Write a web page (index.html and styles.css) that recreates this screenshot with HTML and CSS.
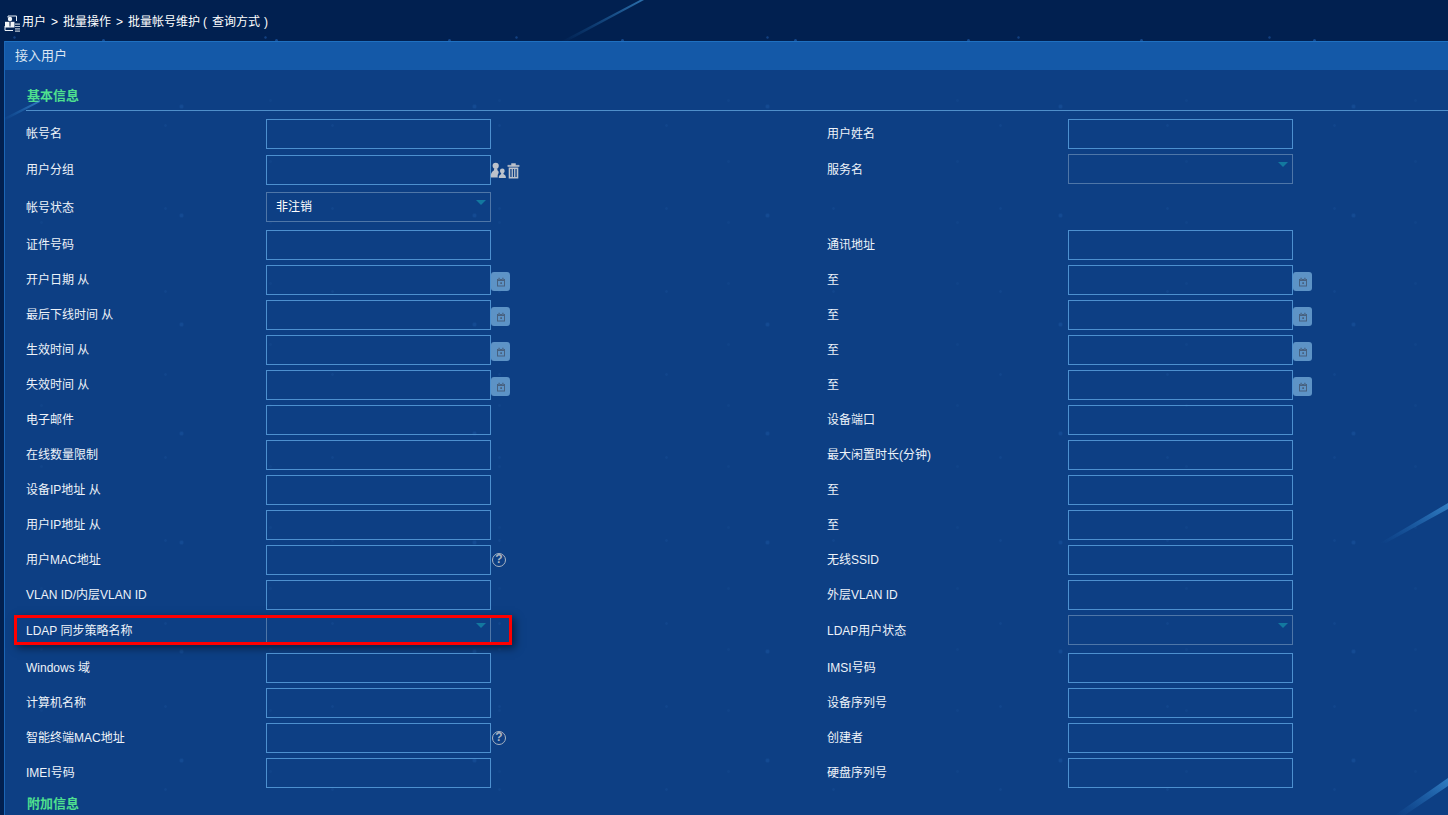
FILE: index.html
```html
<!DOCTYPE html>
<html lang="zh-CN">
<head>
<meta charset="utf-8">
<title>批量帐号维护</title>
<link rel="stylesheet" href="styles.css">
</head>
<body>
<svg class="streaks" width="1448" height="815" viewBox="0 0 1448 815" aria-hidden="true">
  <defs>
    <linearGradient id="s1" x1="0" y1="1" x2="1" y2="0"><stop offset="0" stop-color="#2f8fe0" stop-opacity="0"/><stop offset="1" stop-color="#4fb0f5" stop-opacity=".55"/></linearGradient>
  </defs>
  <polygon points="560,42 640,0 644,0 566,42" fill="url(#s1)"/>
  <polygon points="1380,543 1448,503 1448,509 1386,543" fill="url(#s1)"/>
  <polygon points="1395,815 1448,778 1448,786 1405,815" fill="url(#s1)"/>
  <polygon points="4,118 40,100 40,102 4,121" fill="url(#s1)"/>
</svg>
<header class="crumbs">
  <svg class="crumb-icon" width="16" height="17" viewBox="0 0 16 17" aria-hidden="true">
    <path d="M4 2.500V1H12.500V6M1 11V15.500H9" fill="none" stroke="#e8eef5" stroke-width="1"/>
    <circle cx="6" cy="4" r="2.200" fill="#f2f5f8"/>
    <path d="M1 6.800H10.500V12.500H1Z" fill="#f2f5f8"/>
    <path d="M5.300 6.800H6.700L6.500 11.500H5.500Z" fill="#22385c"/>
    <path d="M11 8.500H16V9.700H11ZM11 10.900H16V12.100H11ZM11 13.300H16V14.500H11ZM11 15.500H16V16.700H11Z" fill="#b9c4d0"/>
  </svg>
  <span>用户</span><span class="sep">&gt;</span><span>批量操作</span><span class="sep">&gt;</span><span>批量帐号维护<span class="paren">(</span>查询方式<span class="paren">)</span></span>
</header>
<main class="panel">
  <h1 class="panel-title">接入用户</h1>
  <div class="panel-body">
    <h2 class="section section-first">基本信息</h2>

    <div class="row r1"><label>帐号名</label><div class="cell"><span class="field"></span></div><label class="lab-r">用户姓名</label><div class="cell"><span class="field"></span></div></div>

    <div class="row r2">
      <label>用户分组</label>
      <div class="cell"><span class="field"></span>
        <svg class="ico-group" width="17" height="17" viewBox="0 0 17 17" aria-hidden="true"><g fill="#bcc2cb"><circle cx="5.700" cy="3.800" r="3.100"/><path d="M4.300 6.500H7.100L7.600 8.500C9 9.500 8.800 10.500 8.400 11.500C7.700 12.500 7.500 14 7.800 15.500H1C.4 12.500 1.200 10 3.800 8.500Z"/><circle cx="12.300" cy="9" r="2.400"/><path d="M11.300 11H13.300L13.700 12.300C15.500 13 16 14.500 15.900 16H8.800C8.700 14.500 9.200 13 10.900 12.300Z"/></g></svg>
        <svg class="ico-trash" width="13" height="16" viewBox="0 0 13 16" aria-hidden="true"><path d="M.8 2.300H12.200V3.500H.8ZM4.500 2.300V.6H8.500V2.300" fill="#bcc2cb" stroke="#bcc2cb" stroke-width=".5"/><path d="M1.700 4.500H11.300V15.500H1.700ZM3.300 6V14H4.600V6ZM5.900 6V14H7.100V6ZM8.400 6V14H9.700V6Z" fill="#bcc2cb" fill-rule="evenodd"/></svg>
      </div>
      <label class="lab-r">服务名</label><div class="cell cell-up"><span class="field select"><i class="caret"></i></span></div>
    </div>

    <div class="row r3"><label class="lab-low">帐号状态</label><div class="cell"><span class="field select">非注销<i class="caret"></i></span></div></div>

    <div class="row r4"><label>证件号码</label><div class="cell"><span class="field"></span></div><label class="lab-r">通讯地址</label><div class="cell"><span class="field"></span></div></div>

    <div class="row"><label>开户日期 从</label><div class="cell"><span class="field"></span><span class="cal"><svg width="10" height="10" viewBox="0 0 10 10" aria-hidden="true"><path d="M1 2H9V9.500H1ZM2 4V8.500H8V4ZM2.500 .8H3.700V2.500H2.500ZM6.300 .8H7.500V2.500H6.300ZM4.300 5.200H6V7H4.300Z" fill="#48617f" fill-rule="evenodd"/></svg></span></div><label class="lab-r">至</label><div class="cell"><span class="field"></span><span class="cal"><svg width="10" height="10" viewBox="0 0 10 10" aria-hidden="true"><path d="M1 2H9V9.500H1ZM2 4V8.500H8V4ZM2.500 .8H3.700V2.500H2.500ZM6.300 .8H7.500V2.500H6.300ZM4.300 5.200H6V7H4.300Z" fill="#48617f" fill-rule="evenodd"/></svg></span></div></div>

    <div class="row"><label>最后下线时间 从</label><div class="cell"><span class="field"></span><span class="cal"><svg width="10" height="10" viewBox="0 0 10 10" aria-hidden="true"><path d="M1 2H9V9.500H1ZM2 4V8.500H8V4ZM2.500 .8H3.700V2.500H2.500ZM6.300 .8H7.500V2.500H6.300ZM4.300 5.200H6V7H4.300Z" fill="#48617f" fill-rule="evenodd"/></svg></span></div><label class="lab-r">至</label><div class="cell"><span class="field"></span><span class="cal"><svg width="10" height="10" viewBox="0 0 10 10" aria-hidden="true"><path d="M1 2H9V9.500H1ZM2 4V8.500H8V4ZM2.500 .8H3.700V2.500H2.500ZM6.300 .8H7.500V2.500H6.300ZM4.300 5.200H6V7H4.300Z" fill="#48617f" fill-rule="evenodd"/></svg></span></div></div>

    <div class="row"><label>生效时间 从</label><div class="cell"><span class="field"></span><span class="cal"><svg width="10" height="10" viewBox="0 0 10 10" aria-hidden="true"><path d="M1 2H9V9.500H1ZM2 4V8.500H8V4ZM2.500 .8H3.700V2.500H2.500ZM6.300 .8H7.500V2.500H6.300ZM4.300 5.200H6V7H4.300Z" fill="#48617f" fill-rule="evenodd"/></svg></span></div><label class="lab-r">至</label><div class="cell"><span class="field"></span><span class="cal"><svg width="10" height="10" viewBox="0 0 10 10" aria-hidden="true"><path d="M1 2H9V9.500H1ZM2 4V8.500H8V4ZM2.500 .8H3.700V2.500H2.500ZM6.300 .8H7.500V2.500H6.300ZM4.300 5.200H6V7H4.300Z" fill="#48617f" fill-rule="evenodd"/></svg></span></div></div>

    <div class="row"><label>失效时间 从</label><div class="cell"><span class="field"></span><span class="cal"><svg width="10" height="10" viewBox="0 0 10 10" aria-hidden="true"><path d="M1 2H9V9.500H1ZM2 4V8.500H8V4ZM2.500 .8H3.700V2.500H2.500ZM6.300 .8H7.500V2.500H6.300ZM4.300 5.200H6V7H4.300Z" fill="#48617f" fill-rule="evenodd"/></svg></span></div><label class="lab-r">至</label><div class="cell"><span class="field"></span><span class="cal"><svg width="10" height="10" viewBox="0 0 10 10" aria-hidden="true"><path d="M1 2H9V9.500H1ZM2 4V8.500H8V4ZM2.500 .8H3.700V2.500H2.500ZM6.300 .8H7.500V2.500H6.300ZM4.300 5.200H6V7H4.300Z" fill="#48617f" fill-rule="evenodd"/></svg></span></div></div>

    <div class="row"><label>电子邮件</label><div class="cell"><span class="field"></span></div><label class="lab-r">设备端口</label><div class="cell"><span class="field"></span></div></div>
    <div class="row"><label>在线数量限制</label><div class="cell"><span class="field"></span></div><label class="lab-r">最大闲置时长(分钟)</label><div class="cell"><span class="field"></span></div></div>
    <div class="row"><label>设备IP地址 从</label><div class="cell"><span class="field"></span></div><label class="lab-r">至</label><div class="cell"><span class="field"></span></div></div>
    <div class="row"><label>用户IP地址 从</label><div class="cell"><span class="field"></span></div><label class="lab-r">至</label><div class="cell"><span class="field"></span></div></div>
    <div class="row"><label>用户MAC地址</label><div class="cell"><span class="field"></span><span class="help">?</span></div><label class="lab-r">无线SSID</label><div class="cell"><span class="field"></span></div></div>
    <div class="row"><label>VLAN ID/内层VLAN ID</label><div class="cell"><span class="field"></span></div><label class="lab-r">外层VLAN ID</label><div class="cell"><span class="field"></span></div></div>

    <div class="row r-mark">
      <label class="lab-low">LDAP 同步策略名称</label><div class="cell"><span class="field select"><i class="caret"></i></span></div>
      <label class="lab-r lab-low">LDAP用户状态</label><div class="cell"><span class="field select"><i class="caret"></i></span></div>
      <span class="mark"></span>
    </div>

    <div class="row"><label>Windows 域</label><div class="cell"><span class="field"></span></div><label class="lab-r">IMSI号码</label><div class="cell"><span class="field"></span></div></div>
    <div class="row"><label>计算机名称</label><div class="cell"><span class="field"></span></div><label class="lab-r">设备序列号</label><div class="cell"><span class="field"></span></div></div>
    <div class="row"><label>智能终端MAC地址</label><div class="cell"><span class="field"></span><span class="help">?</span></div><label class="lab-r">创建者</label><div class="cell"><span class="field"></span></div></div>
    <div class="row"><label>IMEI号码</label><div class="cell"><span class="field"></span></div><label class="lab-r">硬盘序列号</label><div class="cell"><span class="field"></span></div></div>

    <h2 class="section section-second">附加信息</h2>
  </div>
</main>
</body>
</html>
```
FILE: styles.css
```css
* { box-sizing: border-box; }
html, body { height: 815px; overflow: hidden; }
body {
  margin: 0;
  position: relative;
  font-family: "Liberation Sans", "Noto Sans CJK SC", sans-serif;
  font-size: 12px;
  color: #eef3f9;
  background-color: #012050;
  background-image:
    radial-gradient(circle, #1c66b4 0 1.3px, transparent 2.4px),
    radial-gradient(circle, #154a90 0 .9px, transparent 1.8px),
    radial-gradient(circle, #123f80 0 .8px, transparent 1.6px),
    radial-gradient(circle, #103a78 0 .8px, transparent 1.6px);
  background-size: 347px 97px, 173px 71px, 251px 53px, 89px 113px;
  background-position: 60px 23px, 17px 5px, 140px 11px, 40px 31px;
}
.streaks { position: absolute; left: 0; top: 0; z-index: 2; pointer-events: none; }

.crumbs {
  height: 41px;
  padding: 14px 0 0 4px;
  display: flex;
  align-items: flex-start;
  line-height: 17px;
  color: #fff;
}
.crumb-icon { margin: 1px 2px 0 0; flex: none; }
.sep { margin: 0 5px; }
.paren { margin: 0 5px 0 3px; }
.paren:last-child { margin: 0 0 0 4px; }

.panel {
  margin-left: 4px;
  height: 774px;
  position: relative;
  z-index: 1;
  border-left: 1px solid #1c66b6;
  background-color: #0d3f84;
  background-image:
    radial-gradient(circle, #144a92 0 1.2px, transparent 2.6px),
    radial-gradient(circle, #11458c 0 .8px, transparent 1.8px),
    radial-gradient(circle, #104389 0 .8px, transparent 1.8px);
  background-size: 293px 109px, 167px 83px, 229px 61px;
  background-position: 30px 11px, 77px 43px, 151px 29px;
}
.panel-title {
  margin: 0;
  height: 29px;
  padding-left: 10px;
  border-top: 1px solid #1f70c0;
  background: #1459a8;
  font-size: 13px;
  font-weight: 400;
  line-height: 28px;
  color: #dbe6f3;
}
.panel-body { padding-left: 21px; }

.section {
  margin: 0;
  font-size: 13px;
  font-weight: 700;
  color: #4fe08f;
  line-height: 18px;
}
.section-first {
  height: 41px;
  padding: 17px 0 0 1px;
  border-bottom: 1px solid #4f8fca;
}
.section-second { padding: 2px 0 0 1px; }

.row {
  position: relative;
  display: grid;
  grid-template-columns: 240px 225px 577px 225px;
  height: 35px;
}
.row.r1 { margin-top: 8px; height: 36px; }
.row.r2 { height: 37px; }
.row.r3 { height: 38px; }
.row.r-mark { height: 38px; }

.row label { line-height: 30px; white-space: nowrap; }
.row .lab-r { padding-left: 336px; }
.row .lab-low { line-height: 32px; }

.cell { position: relative; }
.cell-up { margin-top: -1px; }
.field {
  display: block;
  width: 225px;
  height: 30px;
  border: 1px solid #4d90cf;
}
.select {
  border-color: #4e76a8;
  padding-left: 9px;
  line-height: 28px;
  color: #fff;
  position: relative;
}
.caret {
  position: absolute;
  right: 4px;
  top: 7px;
  width: 0;
  height: 0;
  border-left: 5px solid transparent;
  border-right: 5px solid transparent;
  border-top: 5px solid #13789f;
}

.ico-group { position: absolute; left: 224px; top: 7px; }
.ico-trash { position: absolute; left: 241px; top: 8px; }
.cal {
  position: absolute;
  left: 225px;
  top: 7px;
  width: 19px;
  height: 19px;
  border-radius: 3px;
  background: #5d93c6;
  display: flex;
  align-items: center;
  justify-content: center;
}
.help {
  position: absolute;
  left: 226px;
  top: 8px;
  width: 14px;
  height: 14px;
  border: 1.5px solid #a9b4c2;
  border-radius: 50%;
  color: #a9b4c2;
  font-size: 12px;
  font-weight: 700;
  line-height: 11px;
  text-align: center;
}
.mark {
  position: absolute;
  left: -12px;
  top: 0;
  width: 498px;
  height: 30px;
  border: 3px solid #ff0000;
  box-shadow: 3px 3px 8px rgba(0, 0, 0, .5);
  pointer-events: none;
}
```
